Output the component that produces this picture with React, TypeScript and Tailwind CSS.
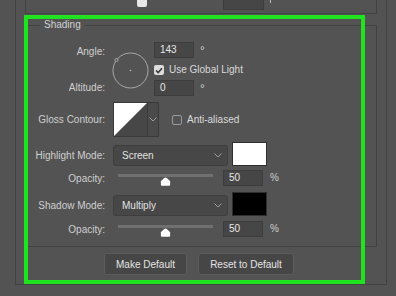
import React from "react";

const font = { fontFamily: '"Liberation Sans", Arial, sans-serif' };

function Chevron() {
  return (
    <svg width="8" height="5" viewBox="0 0 8 5" className="shrink-0">
      <path d="M0.5 0.5 L4 4 L7.5 0.5" fill="none" stroke="#9c9c9c" strokeWidth="1" />
    </svg>
  );
}

function NumberBox({ value, className = "" }: { value: string; className?: string }) {
  return (
    <div className={`flex h-[16px] w-[40px] items-center border border-[#3d3d3d] bg-[#464646] pl-[5px] text-[10px] leading-none text-[#e6e6e6] ${className}`}>
      {value}
    </div>
  );
}

function Select({ value }: { value: string }) {
  return (
    <div className="flex h-[21px] w-[115px] items-center justify-between rounded-[3px] border border-[#3e3e3e] bg-[#474747] pl-[8px] pr-[5px] text-[10px] text-[#e2e2e2]">
      <span>{value}</span>
      <Chevron />
    </div>
  );
}

function Slider() {
  return (
    <div className="ml-[13px] flex h-[16px] w-[95px] flex-col self-start">
      <div className="mt-[4px] h-[3px] w-full bg-[#707070]" />
      <svg width="11" height="10" viewBox="0 0 11 10" className="ml-[42px]">
        <path d="M5.5 0.5 C6.5 0.5 10.5 4 10.5 5 V8.5 C10.5 9.2 10 9.5 9.5 9.5 H1.5 C1 9.5 0.5 9.2 0.5 8.5 V5 C0.5 4 4.5 0.5 5.5 0.5 Z" fill="#ffffff" />
      </svg>
    </div>
  );
}

function OpacityRow({ top }: { top: string }) {
  return (
    <div className={`flex h-[16px] items-start ${top}`}>
      <div className="w-[79px] pt-[3px] text-right text-[10px] leading-[12px] text-[#cfcfcf]">Opacity:</div>
      <Slider />
      <NumberBox value="50" className="ml-[10px]" />
      <span className="ml-[7px] pt-[2px] text-[10px] leading-[12px] text-[#cfcfcf]">%</span>
    </div>
  );
}

function ModeRow({ label, value, swatch, top }: { label: string; value: string; swatch: string; top: string }) {
  return (
    <div className={`flex h-[24px] items-end ${top}`}>
      <div className="flex h-[21px] w-[79px] items-center justify-end text-[10px] text-[#cfcfcf]">{label}</div>
      <div className="ml-[8px]">
        <Select value={value} />
      </div>
      <div className={`ml-[4px] h-[24px] w-[35px] border border-[#2e2e2e] ${swatch}`} />
    </div>
  );
}

function Degree() {
  return <span className="ml-[6px] mt-[3px] text-[12px] leading-[12px] text-[#cfcfcf]">°</span>;
}

export default function App() {
  return (
    <div className="relative h-[296px] w-[396px] overflow-hidden bg-[#535353]" style={font}>
      <div className="ml-[15px] h-[285px] w-[372px] border-x border-b border-[#424242] px-[9px]">
        {/* previous group, cut off at the top */}
        <div className="flex h-[14px] w-[352px] items-start border-x border-b border-[#424242]">
          <div className="-mt-[3px] ml-[111px] h-[10px] w-[10px] rounded-[2px] bg-[#e8e8e8]" />
          <div className="-mt-[4px] ml-[76px] h-[14px] w-[41px] border border-[#3d3d3d] bg-[#464646]" />
          <div className="-mt-[2px] ml-[6px] h-[5px] w-[1px] bg-[#bdbdbd]" />
        </div>

        {/* Shading group */}
        <div className="relative mt-[11px] h-[222px] w-[352px] border border-[#424242]">
          <div className="absolute -top-[7px] left-[14px] bg-[#535353] px-[4px] text-[10px] leading-[12px] text-[#d2d2d2]">
            Shading
          </div>

          {/* angle / altitude */}
          <div className="mt-[16px] flex h-[54px]">
            <div className="flex w-[79px] flex-col justify-between pt-[2px] text-right text-[10px] leading-[16px] text-[#cfcfcf]">
              <span>Angle:</span>
              <span>Altitude:</span>
            </div>
            <svg width="37" height="37" viewBox="0 0 37 37" className="ml-[7px] mt-[10px]">
              <circle cx="18.5" cy="18.5" r="17.5" fill="none" stroke="#a8a8a8" strokeWidth="1" />
              <circle cx="18.5" cy="18.5" r="0.8" fill="#bdbdbd" />
              <circle cx="4.5" cy="8" r="1.6" fill="#535353" stroke="#a8a8a8" strokeWidth="1" />
            </svg>
            <div className="ml-[5px] flex flex-col">
              <div className="flex items-start">
                <NumberBox value="143" />
                <Degree />
              </div>
              <div className="mt-[7px] flex h-[10px] items-center">
                <div className="flex h-[10px] w-[10px] items-center justify-center rounded-[2px] bg-[#dcdcdc]">
                  <svg width="8" height="7" viewBox="0 0 8 7">
                    <path d="M1 3.5 L3.2 5.6 L7 1.2" fill="none" stroke="#3a3a3a" strokeWidth="1.6" />
                  </svg>
                </div>
                <span className="ml-[5px] text-[10px] leading-[12px] text-[#dadada]">Use Global Light</span>
              </div>
              <div className="mt-[5px] flex items-start">
                <NumberBox value="0" />
                <Degree />
              </div>
            </div>
          </div>

          {/* gloss contour */}
          <div className="mt-[6px] flex h-[35px] items-center">
            <div className="w-[79px] text-right text-[10px] text-[#cfcfcf]">Gloss Contour:</div>
            <div className="ml-[8px] flex h-[35px] border border-[#3a3a3a]">
              <svg width="33" height="33" viewBox="0 0 33 33">
                <rect width="33" height="33" fill="#474747" />
                <path d="M0 0 H33 L0 33 Z" fill="#ffffff" />
              </svg>
              <div className="flex w-[11px] items-center justify-center border-l border-[#3a3a3a] bg-[#4a4a4a]">
                <Chevron />
              </div>
            </div>
            <div className="ml-[13px] h-[10px] w-[10px] rounded-[2px] border border-[#9a9a9a]" />
            <span className="ml-[5px] text-[10px] text-[#dadada]">Anti-aliased</span>
          </div>

          <ModeRow label="Highlight Mode:" value="Screen" swatch="bg-white" top="mt-[5px]" />
          <OpacityRow top="mt-[4px]" />
          <ModeRow label="Shadow Mode:" value="Multiply" swatch="bg-black" top="mt-[6px]" />
          <OpacityRow top="mt-[5px]" />
        </div>

        {/* buttons */}
        <div className="mt-[6px] flex gap-[11px] pl-[79px]">
          <button className="h-[22px] w-[83px] rounded-[3px] border border-[#5c5c5c] bg-[#464646] text-[10px] text-[#e4e4e4]">
            Make Default
          </button>
          <button className="h-[22px] w-[96px] rounded-[3px] border border-[#5c5c5c] bg-[#464646] text-[10px] text-[#e4e4e4]">
            Reset to Default
          </button>
        </div>
      </div>

      {/* green highlight annotation */}
      <div className="pointer-events-none absolute left-[24px] top-[15px] h-[269px] w-[341px] border-4 border-[#1ee31e]" />
    </div>
  );
}
